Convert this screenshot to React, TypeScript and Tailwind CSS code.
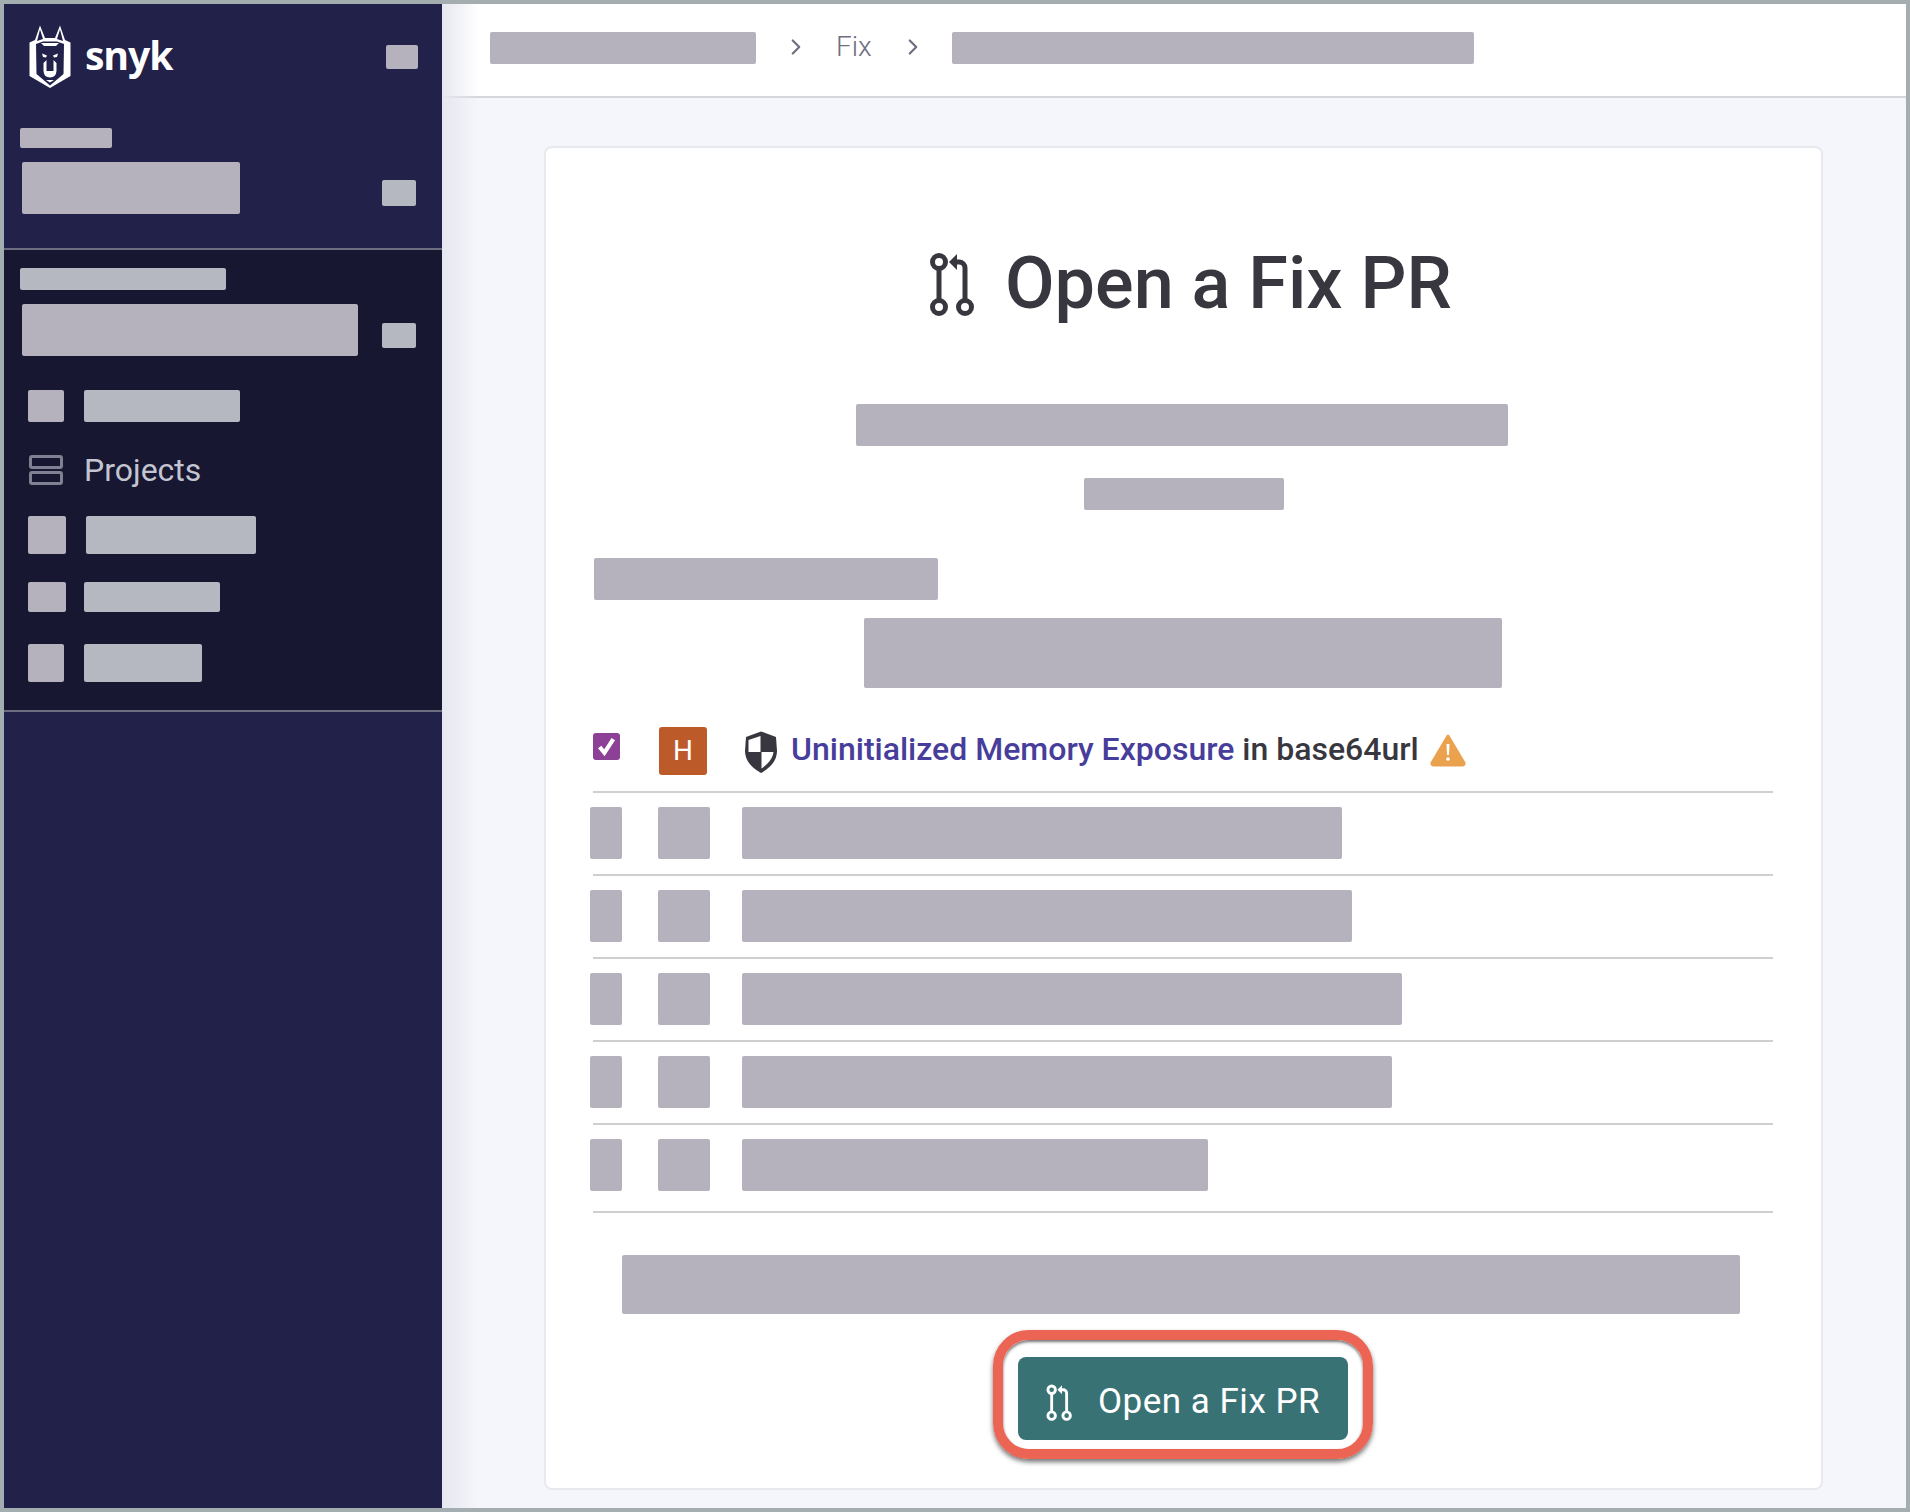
import { ChevronRight } from 'lucide-react'

const issueWidths = ['w-[600px]', 'w-[610px]', 'w-[660px]', 'w-[650px]', 'w-[466px]']

function Block({ className }: { className: string }) {
  return <div className={`shrink-0 rounded-[2px] bg-[#b5b2bd] ${className}`} />
}

function GreyBlock({ className }: { className: string }) {
  return <div className={`shrink-0 rounded-[2px] bg-[#b5b8c0] ${className}`} />
}

function SnykDog() {
  return (
    <svg viewBox="0 0 42 63" className="h-[63px] w-[42px] shrink-0">
      <path d="M11 0.500 L16 13 H26 L31 0.500 L36 15 L41.500 17.500 V51 L21 63 L0.500 51 V17.500 L6 15 Z" fill="#fff" />
      <path d="M11 4.500 L8 16 L14 14 Z M31 4.500 L34 16 L28 14 Z" fill="#21214a" />
      <path d="M7 19 L14 16.500 H28 L35 19 L34.500 49 L21 60.500 L7.500 49 Z" fill="#21214a" />
      <path d="M12 18 H30 L27 21 H15 Z" fill="#fff" />
      <path d="M13 28.500 L18 30.500 L17 32.500 L14 32 Z M29 28.500 L24 30.500 L25 32.500 L28 32 Z" fill="#fff" />
      <path d="M14.500 38 V46 Q15 52.500 21 52.500 Q27 52.500 27.500 46 V38 L24.500 35 V46 H17.500 V35 Z" fill="#fff" />
      <path d="M17 55 H25 L21 57.500 Z" fill="#fff" />
    </svg>
  )
}

function PullRequestIcon({ className }: { className: string }) {
  return (
    <svg viewBox="0 0 48 66" className={className} fill="none" stroke="currentColor" strokeWidth="5">
      <circle cx="13" cy="10" r="6.500" />
      <circle cx="13" cy="55" r="6.500" />
      <circle cx="39" cy="55" r="6.500" />
      <path d="M13 16.500 V48.500" />
      <path d="M30 10 H33 A6 6 0 0 1 39 16 V48.500" />
      <path d="M23 10 L31 2 V18 Z" fill="currentColor" stroke="none" />
    </svg>
  )
}

function ShieldIcon() {
  return (
    <svg viewBox="0 0 34 42" className="h-[42px] w-[34px] shrink-0">
      <path d="M17 0.500 L32 6 L33 20 Q33 33 17 42 Q1 33 1 20 L2 6 Z" fill="#38373f" />
      <path d="M16.500 5 L4.500 9 V21 H16.500 Z M17.500 21 H29.500 Q28.500 30 17.500 37.500 Z" fill="#fff" />
    </svg>
  )
}

function WarningIcon() {
  return (
    <svg viewBox="0 0 38 34" className="h-[34px] w-[38px] shrink-0">
      <path d="M19 3 L35 30 Q35.500 32 33 32 H5 Q2.500 32 3 30 Z" fill="#eba24e" stroke="#eba24e" strokeWidth="3" strokeLinejoin="round" />
      <path d="M17.500 11 H20.500 L20 22 H18 Z" fill="#fff" />
      <circle cx="19" cy="26" r="1.800" fill="#fff" />
    </svg>
  )
}

function Sidebar() {
  return (
    <aside className="flex w-[438px] shrink-0 flex-col bg-[#21214a]">
      <div className="h-[246px] border-b-2 border-[#6d6d82]">
        <div className="flex items-center pl-[25px] pr-[24px] pt-[21px]">
          <SnykDog />
          <span className="ml-[14px] mt-[-4px] font-['Noto_Sans',sans-serif] text-[39px] font-bold leading-[50px] tracking-[-1px] text-white">snyk</span>
          <Block className="ml-auto h-[24px] w-[32px]" />
        </div>
        <Block className="ml-[16px] mt-[40px] h-[20px] w-[92px]" />
        <div className="mt-[14px] flex items-start pl-[18px] pr-[26px]">
          <Block className="h-[52px] w-[218px]" />
          <GreyBlock className="ml-auto mt-[18px] h-[26px] w-[34px]" />
        </div>
      </div>
      <div className="h-[462px] border-b-2 border-[#6d6d82] bg-[#171732]">
        <GreyBlock className="ml-[16px] mt-[18px] h-[22px] w-[206px]" />
        <div className="mt-[14px] flex items-start pl-[18px] pr-[26px]">
          <Block className="h-[52px] w-[336px]" />
          <GreyBlock className="ml-auto mt-[19px] h-[25px] w-[34px]" />
        </div>
        <nav className="pl-[24px]">
          <div className="mt-[34px] flex items-center gap-[20px]">
            <Block className="h-[32px] w-[36px]" />
            <GreyBlock className="h-[32px] w-[156px]" />
          </div>
          <div className="mt-[33px] flex h-[30px] items-center">
            <svg viewBox="0 0 34 30" className="ml-[1px] h-[30px] w-[34px] shrink-0" fill="none" stroke="#7f8092" strokeWidth="3">
              <rect x="1.500" y="1.500" width="31" height="11" rx="1.500" />
              <rect x="1.500" y="17.500" width="31" height="11" rx="1.500" />
            </svg>
            <span className="ml-[21px] font-['Roboto',sans-serif] text-[32px] font-normal leading-[30px] text-[#c4c5d0]">Projects</span>
          </div>
          <div className="mt-[31px] flex items-center gap-[20px]">
            <Block className="h-[38px] w-[38px]" />
            <GreyBlock className="h-[38px] w-[170px]" />
          </div>
          <div className="mt-[28px] flex items-center gap-[18px]">
            <Block className="h-[30px] w-[38px]" />
            <GreyBlock className="h-[30px] w-[136px]" />
          </div>
          <div className="mt-[32px] flex items-center gap-[20px]">
            <Block className="h-[38px] w-[36px]" />
            <GreyBlock className="h-[38px] w-[118px]" />
          </div>
        </nav>
      </div>
    </aside>
  )
}

function IssueRows() {
  return (
    <div className="ml-[44px] mt-[39px] w-[1183px]">
      <div className="flex h-[64px] items-start font-['Roboto',sans-serif]">
        <div className="ml-[3px] mt-[6px] flex h-[27px] w-[27px] shrink-0 items-center justify-center rounded-[3px] bg-[#8c4096]">
          <svg viewBox="0 0 20 20" className="h-[21px] w-[21px]" fill="none" stroke="#fff" strokeWidth="4">
            <path d="M3.500 10.500 L8 16 L16.500 3" />
          </svg>
        </div>
        <div className="ml-[39px] flex h-[48px] w-[48px] shrink-0 items-center justify-center rounded-[3px] bg-[#bd5a2a] text-[28px] font-normal text-white">H</div>
        <div className="ml-[37px] mt-[4px]">
          <ShieldIcon />
        </div>
        <p className="ml-[13px] mt-[2px] whitespace-nowrap text-[32px] font-medium leading-[40px] text-[#38373f]">
          <span className="text-[#473d9b]">Uninitialized Memory Exposure</span> in base64url
        </p>
        <div className="ml-[10px] mt-[6px]">
          <WarningIcon />
        </div>
      </div>
      <div className="ml-[3px] h-[2px] bg-[#cfcfd2]" />
      {issueWidths.map((width, i) => (
        <div key={width}>
          <div className={i === 4 ? 'flex pb-[20px] pt-[14px]' : 'flex pb-[15px] pt-[14px]'}>
            <Block className="h-[52px] w-[32px]" />
            <Block className="ml-[36px] h-[52px] w-[52px]" />
            <Block className={`ml-[32px] h-[52px] ${width}`} />
          </div>
          <div className="ml-[3px] h-[2px] bg-[#cfcfd2]" />
        </div>
      ))}
    </div>
  )
}

export default function App() {
  return (
    <div className="flex h-[1512px] w-[1910px] border-4 border-[#a4adb0] bg-[#f4f6fb]">
      <Sidebar />
      <main className="relative flex min-w-0 flex-1 flex-col">
        <div className="pointer-events-none absolute inset-y-0 left-0 w-[36px] bg-gradient-to-r from-[#e6e7ef] to-transparent" />
        <header className="flex h-[94px] shrink-0 items-start border-b-2 border-[#d5d7dc] bg-white pl-[48px] pt-[28px] font-['Roboto',sans-serif] text-[#6f6e80]">
          <Block className="h-[32px] w-[266px]" />
          <ChevronRight className="ml-[27px] mt-[2px] h-[26px] w-[26px] shrink-0" strokeWidth={2} />
          <span className="ml-[27px] mt-[-1px] text-[28px] font-light leading-[32px]">Fix</span>
          <ChevronRight className="ml-[28px] mt-[2px] h-[26px] w-[26px] shrink-0" strokeWidth={2} />
          <Block className="ml-[26px] h-[32px] w-[522px]" />
        </header>
        <section className="pl-[102px] pt-[48px]">
          <div className="h-[1344px] w-[1279px] rounded-[8px] border-2 border-[#e8e9ee] bg-white font-['Roboto',sans-serif]">
            <div className="ml-[380px] mt-[104px] flex h-[66px] items-center text-[#38373f]">
              <PullRequestIcon className="h-[66px] w-[48px] shrink-0" />
              <h1 className="ml-[31px] mt-[-3px] whitespace-nowrap text-[72px] font-medium leading-[66px]">Open a Fix PR</h1>
            </div>
            <Block className="ml-[310px] mt-[86px] h-[42px] w-[652px]" />
            <Block className="ml-[538px] mt-[32px] h-[32px] w-[200px]" />
            <Block className="ml-[48px] mt-[48px] h-[42px] w-[344px]" />
            <Block className="ml-[318px] mt-[18px] h-[70px] w-[638px]" />
            <IssueRows />
            <Block className="ml-[76px] mt-[42px] h-[59px] w-[1118px]" />
            <div className="ml-[447px] mt-[16px] h-[129px] w-[380px] rounded-[36px] border-[10px] border-[#ec6453] pl-[15px] pt-[17px] shadow-[0_3px_5px_rgba(0,0,0,0.55),inset_0_2px_3px_rgba(0,0,0,0.55)]">
              <button className="flex h-[83px] w-[330px] items-center rounded-[8px] bg-[#397275] pl-[26px] pt-[8px] text-white">
                <PullRequestIcon className="h-[38px] w-[28px] shrink-0" />
                <span className="ml-[26px] whitespace-nowrap text-[35px] font-normal tracking-[0.5px]">Open a Fix PR</span>
              </button>
            </div>
          </div>
        </section>
      </main>
    </div>
  )
}
